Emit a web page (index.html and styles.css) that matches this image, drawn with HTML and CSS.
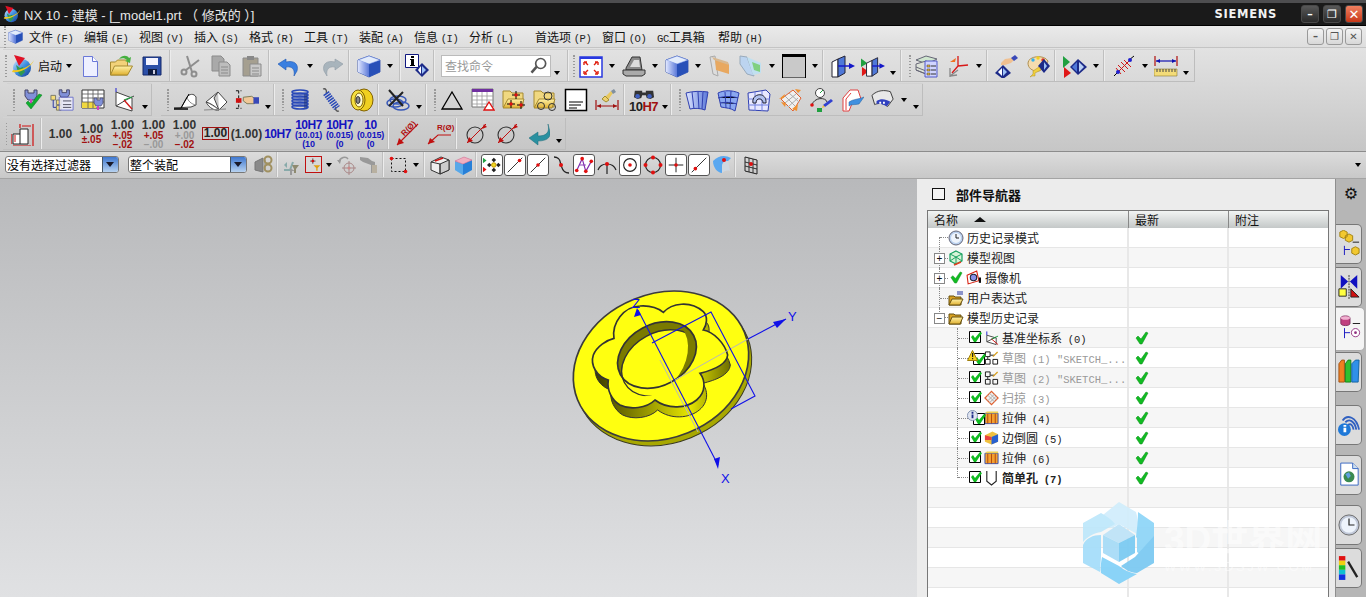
FILE: index.html
```html
<!DOCTYPE html>
<html lang="zh">
<head>
<meta charset="utf-8">
<title>NX 10 - 建模</title>
<link rel="stylesheet" href="styles.css">
</head>
<body>
<svg class="defs" xmlns="http://www.w3.org/2000/svg">
<defs>
<linearGradient id="gb" x1="0" y1="0" x2="1" y2="1"><stop offset="0" stop-color="#cfe6ff"/><stop offset=".5" stop-color="#3f8fe0"/><stop offset="1" stop-color="#123a90"/></linearGradient>
<linearGradient id="gy" x1="0" y1="0" x2="0" y2="1"><stop offset="0" stop-color="#fff2a8"/><stop offset="1" stop-color="#e0b030"/></linearGradient>
<linearGradient id="gs" x1="0" y1="0" x2="1" y2="0"><stop offset="0" stop-color="#dfe6ff"/><stop offset="1" stop-color="#5a78d8"/></linearGradient>
<linearGradient id="gw" x1="0" y1="0" x2="1" y2="0"><stop offset="0" stop-color="#3c3c00"/><stop offset=".45" stop-color="#a8a800"/><stop offset=".7" stop-color="#e6e600"/><stop offset="1" stop-color="#6e6e00"/></linearGradient>
<symbol id="start" viewBox="0 0 24 24"><circle cx="11" cy="14" r="9" fill="url(#gb)"/><path d="M5 11l4 3 3-1 2 5-4 4-3-4z" fill="#2f9a50"/><path d="M1 18C8 20 21 13 23 6c-3 6-13 11-21 10z" fill="#f0c820"/><path d="M3 1l11 3-6 8z" fill="#e01225"/></symbol>
<symbol id="new" viewBox="0 0 24 24"><path d="M5.500 2.500h9l5 5v15h-14z" fill="#eef0ff" stroke="#6a78d8"/><path d="M14.500 2.500v5h5" fill="#fff" stroke="#6a78d8"/></symbol>
<symbol id="open" viewBox="0 0 24 24"><path d="M1.500 21V8h5l2-2h10v15z" fill="#f2d27a" stroke="#a68a30"/><path d="M1.500 21l4-9h18l-5 9z" fill="url(#gy)" stroke="#a68a30"/><path d="M10 5C13 1 18 1 20 4l2-1-1 6-5-2 2-1c-2-2-5-2-8-1z" fill="#46b040"/></symbol>
<symbol id="save" viewBox="0 0 24 24"><path d="M3 3h18v18H3z" fill="#2b4fa8" stroke="#14286a"/><path d="M6 4h12v7H6z" fill="#f4f4ff"/><path d="M8 15h9v6H8z" fill="#101c40"/><path d="M13 16h2v4h-2z" fill="#ccd"/></symbol>
<symbol id="scis" viewBox="0 0 24 24"><g fill="none" stroke="#8e8e8e" stroke-width="2"><circle cx="6" cy="18" r="2.500"/><circle cx="16" cy="20" r="2.500"/><path d="M8 16L21 6M14 18L9 2"/></g></symbol>
<symbol id="copy" viewBox="0 0 24 24"><path d="M3 2h9l3 3v12H3z" fill="#a9a9a9" stroke="#8b8b8b"/><path d="M10 8h8l3 3v11H10z" fill="#bdbdbd" stroke="#8b8b8b"/><path d="M12 13h7M12 16h7M12 19h7" stroke="#8b8b8b"/></symbol>
<symbol id="paste" viewBox="0 0 24 24"><path d="M3 4h15v18H3z" fill="#a59f90" stroke="#8b8b8b"/><path d="M7 2h7v4H7z" fill="#888"/><path d="M10 10h11v12H10z" fill="#c8c8c8" stroke="#8b8b8b"/><path d="M12 14h7M12 17h7M12 20h7" stroke="#8b8b8b"/></symbol>
<symbol id="undo" viewBox="0 0 24 24"><path d="M1 10l8-5v3c8-2 13 2 11 9l-3 5c1-6-1-10-8-9v3z" fill="#3a7fe0" stroke="#1f55b0" stroke-width=".6"/></symbol>
<symbol id="redo" viewBox="0 0 24 24"><path d="M23 10l-8-5v3C7 6 2 10 4 17l3 5C6 16 8 12 15 13v3z" fill="#a8b4bc" stroke="#8e9aa4" stroke-width=".6"/></symbol>
<symbol id="cube" viewBox="0 0 24 24"><path d="M1 6l11-4 11 4v12l-11 5-11-5z" fill="#9dbdf0" stroke="#2a48a8" stroke-width=".8"/><path d="M12 10l11-4v12l-11 5z" fill="#2850b8"/><path d="M1 6l11-4 11 4-11 4z" fill="#e3ecfb" stroke="#5a78d8" stroke-width=".5"/><path d="M1 6l11 4v13L1 18z" fill="url(#gs)"/></symbol>
<symbol id="info" viewBox="0 0 24 24"><path d="M.500 .500h13v13H.500z" fill="#fff" stroke="#101880"/><path d="M6 2h3v2H6zM5 5h4v6h1v1H5v-1h1V6H5z" fill="#000"/><path d="M17 9l7 7-7 7-7-7z" fill="#1c2a88"/><path d="M17 12l4 4-4 4z" fill="#9dc0f5"/><path d="M16 12v8l-3-4z" fill="#fff"/></symbol>
<symbol id="lens" viewBox="0 0 24 24"><circle cx="14" cy="9" r="6" fill="#fff" stroke="#555" stroke-width="2"/><path d="M9 13l-6 7" stroke="#555" stroke-width="3"/></symbol>
<symbol id="fit" viewBox="0 0 24 24"><path d="M1 3h22v20H1z" fill="#fff" stroke="#2838e0" stroke-width="1.500"/><path d="M1 3h22v2H1z" fill="#2838e0"/><path d="M6 8l3 3M18 8l-3 3M6 19l3-3M18 19l-3-3M5 8h3M5 8v3M19 8h-3M19 8v3M5 20h3M5 20v-3M19 20h-3M19 20v-3" stroke="#e02010" stroke-width="1.400"/></symbol>
<symbol id="shade" viewBox="0 0 24 24"><path d="M4 14L10 3h8l2 13H4z" fill="#8a8a8a" stroke="#333"/><path d="M8 13l4-7h5l1 7z" fill="#ddd"/><path d="M1 16h22v4l-3 2H4l-3-2z" fill="#aaa" stroke="#333"/></symbol>
<symbol id="boxo" viewBox="0 0 24 24"><path d="M2 3l5-1 3 20-5-2z" fill="#ddd" stroke="#aaa"/><path d="M7 5l14 5v10l-13-4z" fill="#e8a860"/><path d="M4 3l16 5 1 3-15-5z" fill="#d8b890"/></symbol>
<symbol id="boxg" viewBox="0 0 24 24"><path d="M1 2l7 1 7 19-7-2-7-10z" fill="#bcd4f0" stroke="#9ab"/><path d="M8 3l14 6v10l-8 2z" fill="#c0e0f0"/><path d="M13 8l8 3v7l-6-2z" fill="#80d080"/></symbol>
<symbol id="sq" viewBox="0 0 24 24"><path d="M.500 1h23v23H.500z" fill="#c9c9c9" stroke="#000"/><path d="M0 0h24v3H0z" fill="#000"/></symbol>
<symbol id="clip1" viewBox="0 0 24 24"><path d="M1 8l6-3v18l-6 0z" fill="#fff" stroke="#223"/><path d="M7 5l7-3v17l-7 4z" fill="#4f78d8" stroke="#223"/><path d="M7 12h13" stroke="#1418c8" stroke-width="1.500"/><path d="M24 12l-6-3v6z" fill="#1418c8"/></symbol>
<symbol id="clip2" viewBox="0 0 26 24"><path d="M0 4l7 5-7 4z" fill="#20a040"/><path d="M1 13l7 5-7 5z" fill="#e01818"/><path d="M6 9l6-3v17H6z" fill="#fff" stroke="#223"/><path d="M12 6l6-3v16l-6 4z" fill="#4f78d8" stroke="#223"/><path d="M12 12h9" stroke="#1418c8" stroke-width="1.500"/><path d="M26 12l-6-3v6z" fill="#1418c8"/></symbol>
<symbol id="layers" viewBox="0 0 24 24"><path d="M1 6l10-4 11 3-10 5z" fill="#cfe6cf" stroke="#667"/><path d="M1 10l10-3 5 2v8l-5 3-10-4z" fill="#dde2d8" stroke="#667"/><path d="M1 13l10 4M1 16l10 4" stroke="#667"/><path d="M10 7h12v16H10z" fill="#d0d4ff" stroke="#5058c8"/><path d="M12 11h3v2h-3zM12 15h3v2h-3zM12 19h3v2h-3z" fill="#f0c040" stroke="#333" stroke-width=".5"/><path d="M16 12h5M16 16h5M16 20h5" stroke="#333"/></symbol>
<symbol id="csysr" viewBox="0 0 24 24"><path d="M12 12V2M12 12l10-1M12 12l-6 7" stroke="#d81818" stroke-width="1.300"/><path d="M4 8l6-4-1 4z" fill="#f07020"/><path d="M4 14v9M4 22l7-1M4 22l8-6" stroke="#888" stroke-width="1.300"/></symbol>
<symbol id="hand" viewBox="0 0 24 24"><path d="M6 9l4-4 7-1 2 2-3 3-6 2-4 0z" fill="#f0c090"/><path d="M16 4l4-3 3 3-4 3z" fill="#3848b8"/><path d="M8 11l8 8-8 6-8-6z" fill="#1c2a88"/><path d="M8 14v8l4-4z" fill="#9dc0f5"/><path d="M7 14v8l-4-4z" fill="#fff"/></symbol>
<symbol id="palette" viewBox="0 0 24 24"><path d="M2 9C2 2 18 0 22 7c0 3-4 3-5 5-2 3-1 5-6 5C6 17 2 14 2 9z" fill="#f5dcae" stroke="#b09050"/><circle cx="7" cy="6" r="1.700" fill="#35b0e8"/><circle cx="12" cy="4" r="1.700" fill="#f0d020"/><circle cx="17" cy="6" r="1.700" fill="#e03020"/><path d="M18 5l6 7-6 7-6-7z" fill="#1c2a88"/><path d="M18 8v8l3-4z" fill="#9dc0f5"/><path d="M4 23l3-3v-3l6-4 2 3-6 3v3H6z" fill="#f0d040" stroke="#b09020" stroke-width=".5"/></symbol>
<symbol id="tridia" viewBox="0 0 24 24"><path d="M0 2l7 6-7 6z" fill="#20a040"/><path d="M1 13l7 6-7 5z" fill="#e01818"/><path d="M15 5l9 8-9 8-8-8z" fill="#1c2a88"/><path d="M16 8v10l5-5z" fill="#b9cff5"/><path d="M14 8v10l-5-5z" fill="#4f78d8"/></symbol>
<symbol id="hatch" viewBox="0 0 24 24"><path d="M2 22l6-6M22 2l-5 4" stroke="#000"/><path d="M6 18L18 6" stroke="#d01818"/><path d="M6 11l7 7M9 8l7 7M12 6l7 7M4 14l5 6" stroke="#d01818"/><circle cx="6" cy="18" r="2" fill="#2020d0"/><circle cx="18" cy="6" r="2" fill="#2020d0"/></symbol>
<symbol id="ruler" viewBox="0 0 24 24"><path d="M1 2v10M23 2v10" stroke="#b01010" stroke-width="1.200"/><path d="M2 7h20" stroke="#1010b0" stroke-width="1.200"/><path d="M2 7l4-2v4zM22 7l-4-2v4z" fill="#1010b0"/><path d="M0 15h23v7H0z" fill="#f4dc78" stroke="#8a7a30" stroke-width=".6"/><path d="M3 15v3M6 15v3M9 15v3M12 15v3M15 15v3M18 15v3M21 15v3" stroke="#444"/></symbol>
<symbol id="chk" viewBox="0 0 24 24"><path d="M6 2h3v3h6V2h3v6l-3 4H9L6 8z" fill="#8090d8" stroke="#446"/><path d="M11 11h2v4h-2z" fill="#d040c0"/><path d="M7 15l5 6 11-14-3-1-8 10-3-3z" fill="#10b030" stroke="#0a7a20" stroke-width=".5"/></symbol>
<symbol id="tree" viewBox="0 0 26 24"><path d="M10 1h3v3h5V1h3v5l-2 3h-7l-2-3z" fill="#8090d8" stroke="#446"/><path d="M1 7h5v5H1zM7 12h5v5H7zM7 18h5v5H7z" fill="#f4dc78" stroke="#776"/><path d="M3.500 12v8h3" fill="none" stroke="#2030a0"/><path d="M10 9h15v14H10z" fill="#eef" stroke="#5058c8" opacity=".8"/><path d="M14 13h9M14 17h9M14 20h9" stroke="#445"/></symbol>
<symbol id="table" viewBox="0 0 24 24"><path d="M1 2h22v18H1z" fill="#fff" stroke="#333"/><path d="M1 14h14v6H1z" fill="#f0d840"/><path d="M1 6h22M1 10h22M1 14h22M7 2v18M12 2v18M17 2v18" stroke="#555" stroke-width=".8"/><path d="M13 10h3v2h3v-2h3v5l-2 3h-5l-2-3z" fill="#8090d8" stroke="#446" stroke-width=".7"/><path d="M16 18h2v4h-2z" fill="#d040c0"/></symbol>
<symbol id="csysg" viewBox="0 0 24 24"><path d="M4 4v14l16 5V10z" fill="#fff" stroke="#444"/><path d="M4 18l10-6 8-4" stroke="#444" fill="none"/><path d="M4 4V0" stroke="#2020d0"/><path d="M12 12l8-3" stroke="#20a040" stroke-width="1.300"/><path d="M12 12l8 9" stroke="#d01818" stroke-width="1.300"/></symbol>
<symbol id="sk1" viewBox="0 0 24 24"><path d="M1 20l7 0 6-11c2-3 7-4 9 0v8l-5 2z" fill="#fff" stroke="#444"/><path d="M14 9c1 4 4 7 9 8" fill="none" stroke="#888"/><path d="M1 21h14" stroke="#000" stroke-width="1.500"/><path d="M8 20l8-14" stroke="#000"/></symbol>
<symbol id="sk2" viewBox="0 0 24 24"><path d="M2 14l12-10 9 10-8 8c-4 1-10-2-13-8z" fill="#fff" stroke="#444"/><path d="M2 14c4 1 9 4 13 8" fill="#aaa" stroke="#444"/><path d="M14 4l-4 6 5 12" fill="#c8c8c8" stroke="#444"/><path d="M0 22l22-1" stroke="#888"/></symbol>
<symbol id="ihand" viewBox="0 0 26 24"><path d="M1 2h6M4 2v19M1 21h6" stroke="#000" fill="none" stroke-dasharray="3 2"/><path d="M1 10h6v5H1z" fill="#d01010"/><path d="M9 9l9-1 3 2v6h-8l-4-3z" fill="#f0c898" stroke="#775"/><path d="M20 9h6v7h-6z" fill="#3848b8"/></symbol>
<symbol id="spr1" viewBox="0 0 24 24"><g fill="none" stroke="#2848b8" stroke-width="1.700"><ellipse cx="12" cy="4" rx="8" ry="2"/><ellipse cx="12" cy="7" rx="8" ry="2"/><ellipse cx="12" cy="10" rx="8" ry="2"/><ellipse cx="12" cy="13" rx="8" ry="2"/><ellipse cx="12" cy="16" rx="8" ry="2"/><ellipse cx="12" cy="19" rx="8" ry="2"/></g><path d="M16 6h3v14h-3z" fill="#1a2f78" opacity=".5"/></symbol>
<symbol id="spr2" viewBox="0 0 24 24"><path d="M4 1c3-1 4 2 3 4M20 23c-3 1-4-2-3-4" stroke="#555" stroke-width="1.300" fill="none"/><path d="M7 5l11 15" stroke="#2848b8" stroke-width="7" stroke-dasharray="1.500 1"/></symbol>
<symbol id="coil" viewBox="0 0 24 24"><ellipse cx="14" cy="12" rx="9" ry="11" fill="#f0d020" stroke="#806000"/><ellipse cx="8" cy="12" rx="7" ry="10" fill="#f5e040" stroke="#806000"/><ellipse cx="9" cy="12" rx="4" ry="7" fill="#fffbd0" stroke="#806000"/><ellipse cx="8" cy="12" rx="2" ry="3.500" fill="#888" stroke="#333"/></symbol>
<symbol id="xspr" viewBox="0 0 24 24"><g fill="none" stroke="#3858b8" stroke-width="1.500"><ellipse cx="9" cy="15" rx="8" ry="4"/><ellipse cx="12" cy="12" rx="8" ry="4"/><ellipse cx="15" cy="18" rx="8" ry="4"/></g><path d="M3 2l14 16M17 4L3 18" stroke="#222" stroke-width="2"/></symbol>
<symbol id="tri" viewBox="0 0 24 24"><path d="M2 21L12 4l10 17z" fill="none" stroke="#000" stroke-width="1.300"/></symbol>
<symbol id="ptable" viewBox="0 0 24 24"><path d="M1 1h21v18H1z" fill="#fff" stroke="#777"/><path d="M1 1h21v3H1z" fill="#7030a0"/><path d="M1 8h21M1 12h21M1 16h21M6 4v15M11 4v15M16 4v15" stroke="#999" stroke-width=".8"/><path d="M13 22l5-8 5 8z" fill="#fff" stroke="#e01010" stroke-width="1.300"/></symbol>
<symbol id="fplus" viewBox="0 0 24 24"><path d="M1 19V3h7l2 2h11v14z" fill="#f0d880" stroke="#a68a30"/><path d="M6 11h16l-3 9H1z" fill="url(#gy)" stroke="#a68a30"/><path d="M14 3v8M10 7h8M9 12v8M5 16h8M19 13v8M15 17h8" stroke="#000"/><circle cx="14" cy="7" r="1.700" fill="#e01010"/><circle cx="9" cy="16" r="1.700" fill="#e01010"/><circle cx="19" cy="17" r="1.700" fill="#e01010"/></symbol>
<symbol id="fcirc" viewBox="0 0 24 24"><path d="M1 19V3h7l2 2h11v14z" fill="#f0d880" stroke="#a68a30"/><path d="M6 11h16l-3 9H1z" fill="url(#gy)" stroke="#a68a30"/><g fill="none" stroke="#333"><circle cx="15" cy="8" r="4"/><circle cx="8" cy="18" r="3.500"/><circle cx="19" cy="19" r="3.500"/></g></symbol>
<symbol id="note" viewBox="0 0 24 24"><path d="M1.500 1.500h21v21h-21z" fill="#fff" stroke="#000" stroke-width="1.500"/><path d="M5 14h14M5 17h12M5 20h8" stroke="#000"/></symbol>
<symbol id="brush" viewBox="0 0 24 24"><path d="M10 9l6-6 2 2-5 7z" fill="#e8c860"/><path d="M16 3l3-2 2 3-3 2z" fill="#8090a0"/><path d="M10 8l4 4-3 2-4-3z" fill="#f0d070" stroke="#a09030"/><path d="M1 12v10M23 12v10" stroke="#a01010" stroke-width="1.200"/><path d="M2 18h20" stroke="#a01010"/><path d="M2 18l4-2v4zM22 18l-4-2v4z" fill="#a01010"/></symbol>
<symbol id="binoc" viewBox="0 0 24 14"><path d="M2 4h8v2h4V4h8l1 7-4 2-4-1-1-3h-4l-1 3-4 1-4-2z" fill="#333"/><circle cx="5" cy="10" r="2.500" fill="#4060c0"/><circle cx="18" cy="10" r="2.500" fill="#4060c0"/></symbol>
<symbol id="s1" viewBox="0 0 24 24"><path d="M1 5c7-2 15-2 22-1l-3 18c-5-2-11-2-15-1z" fill="url(#gs)" stroke="#3040b0"/><path d="M7 4l2 17M13 4l1 17M18 4l-1 17" stroke="#3040b0"/></symbol>
<symbol id="s2" viewBox="0 0 24 24"><path d="M2 5c6-3 14-3 21 0l-4 18c-4-3-9-3-14-4z" fill="#8aa8f0" stroke="#3040b0"/><path d="M2 10c7-2 14-2 20 0M4 15c5-1 10-1 17 1M9 4l1 16M15 3l-1 18" stroke="#3040b0"/></symbol>
<symbol id="s3" viewBox="0 0 24 24"><path d="M1 5l18-3 4 4-2 17-19-1z" fill="#e8e8ff" stroke="#3040b0"/><path d="M1 11h22M1 17h21M8 4v19M15 3v20" stroke="#7080e0"/><path d="M6 15c-2-10 14-12 13 0l-3 0c0-5-7-6-7 0z" fill="#b0c0f0" stroke="#223"/></symbol>
<symbol id="s4" viewBox="0 0 24 24"><path d="M3 11L15 2l8 8-8 13z" fill="#f0f0f0" stroke="#e06030"/><path d="M7 8l11 11M11 5l10 9M7 15l11-9M10 19l10-9" stroke="#aaa"/><path d="M1 11l6-5-1 4zM17 1l6 1-3 3zM14 21l6-5-1 7zM3 14l5 1-1 4z" fill="#f09030"/></symbol>
<symbol id="s5" viewBox="0 0 24 24"><circle cx="11" cy="5" r="4.500" fill="#fff" stroke="#444"/><path d="M11 5l3-3" stroke="#20a040"/><path d="M3 17C5 9 17 9 18 14" fill="none" stroke="#333"/><circle cx="3" cy="17" r="1.800" fill="#e01010"/><path d="M8 20h5v4H8z" fill="#20a040"/><path d="M14 17l8-6 2 2-8 6z" fill="#3040d0"/><path d="M14 17l2 2-3 1z" fill="#f0c040"/></symbol>
<symbol id="s6" viewBox="0 0 24 24"><path d="M3 23V10l7-8h8l3 9-8 2-4 10z" fill="#fff" stroke="#e04040"/><path d="M6 22V11l5-6" stroke="#e04040" fill="none"/><path d="M9 14c4-3 11-3 15-5l-5 7c-4 1-8 0-10 2z" fill="#4090e0" stroke="#2060a0" stroke-width=".5"/></symbol>
<symbol id="s7" viewBox="0 0 26 24"><path d="M1 7c6-6 14-6 20-4l3 8-6 8c-6-5-12-3-14-2z" fill="#e8e8e8" stroke="#333"/><path d="M6 13c5-3 10-2 15 1l-4 5c-4-3-8-3-11-3z" fill="#3040c0"/><path d="M9 14h2v2H9zM13 14h2v2h-2z" fill="#fff"/></symbol>
<symbol id="dimd" viewBox="0 0 24 24"><path d="M2 12h7v10H2zM9 12V7h8v15H9" fill="#fff" stroke="#222"/><path d="M20 4h-9M4 20v-7" stroke="#d01010"/><path d="M9 2v4M22 2v22M0 12v10M2 24h18" stroke="#d01010" stroke-width="1.200"/></symbol>
<symbol id="rd1" viewBox="0 0 24 24"><path d="M1 23l21-21" stroke="#c01010" stroke-width="1.100"/><path d="M1 23l2-7 5 5z" fill="#c01010"/></symbol>
<symbol id="rd2" viewBox="0 0 24 24"><path d="M1 22L11 13h13" stroke="#c01010" fill="none" stroke-width="1.100"/><path d="M1 22l2-6 5 4z" fill="#c01010"/></symbol>
<symbol id="cd1" viewBox="0 0 24 24"><circle cx="11" cy="13" r="8" fill="none" stroke="#333" stroke-width="1.100"/><path d="M3 21L22 2" stroke="#c01010"/><path d="M3 21l2-6 4 4zM18 7l2-5 3 3z" fill="#c01010"/></symbol>
<symbol id="ret" viewBox="0 0 24 24"><path d="M22 2c2 9-2 12-10 12v-4l-9 6 9 7v-4c8 0 13-3 12-9z" fill="#2a90a0" stroke="#1a6a78" stroke-width=".5"/></symbol>
<symbol id="d1" viewBox="0 0 22 22"><path d="M2 16h6l3-8" stroke="#8aa" fill="none" stroke-width="2"/><path d="M8 14l5 3h-3v4H8z" fill="#999"/><path d="M10 11l7 0-3 4v4h-2v-4z" fill="#8e8a70"/><path d="M2 11l3-3v6z" fill="#8aa"/></symbol>
<symbol id="d2" viewBox="0 0 22 22"><path d="M6 6h8M10 2v8" stroke="#222"/><circle cx="10" cy="6" r="2" fill="#d01010"/><path d="M11 12h10l-4 4v4h-2v-4z" fill="#e0a010"/></symbol>
<symbol id="d3" viewBox="0 0 22 22"><path d="M3 8C4 3 10 2 12 5" stroke="#999" fill="none" stroke-width="1.500"/><path d="M1 6l4 0-1 4z" fill="#999"/><circle cx="13" cy="14" r="5" fill="none" stroke="#a88"/><path d="M13 7v14M6 14h14" stroke="#a88"/><circle cx="13" cy="14" r="1.500" fill="#c88"/></symbol>
<symbol id="d4" viewBox="0 0 22 22"><path d="M1 3l8 1 4 3 3 1v11h-4v-8l-8-3-3-2z" fill="#999"/><path d="M13 11h5v8h-5z" fill="#b8b0a0"/></symbol>
<symbol id="link" viewBox="0 0 22 22"><path d="M2 8l8-4v14l-8-2z" fill="#8a8a8a" stroke="#777"/><path d="M10 4l3 2v10l-3 2z" fill="#aaa"/><g fill="none" stroke="#a09060" stroke-width="2"><circle cx="15" cy="6" r="3.500"/><circle cx="15" cy="14" r="3.500"/></g></symbol>
<symbol id="rect" viewBox="0 0 22 22"><path d="M3.500 4.500h14v13h-14z" fill="none" stroke="#111" stroke-dasharray="2 2"/><circle cx="3.500" cy="4.500" r="1.800" fill="#e01010"/><circle cx="17.500" cy="17.500" r="1.800" fill="#e01010"/></symbol>
<symbol id="bx1" viewBox="0 0 22 22"><path d="M2 8l10-5 8 3v10l-9 4-9-4z" fill="#eee" stroke="#333"/><path d="M11 10l9-4v10l-9 4z" fill="#ccc" stroke="#333"/><path d="M2 8l9 2v10" fill="none" stroke="#333"/><path d="M6 7l8-3" stroke="#d01010" stroke-width="1.500"/></symbol>
<symbol id="bx2" viewBox="0 0 22 22"><path d="M3 7l9-4 8 3v10l-9 5-8-5z" fill="#8ac0f0"/><path d="M11 10l9-4v10l-9 5z" fill="#2880d8"/><path d="M3 7l8 3v11l-8-5z" fill="#58a8e8"/><path d="M3 7l9-4 8 3-9 4z" fill="#f0b0c0" stroke="#e06080" stroke-width=".5"/></symbol>
<symbol id="sn1" viewBox="0 0 22 22"><path d="M1 3l4 3-4 3z" fill="#20a040"/><path d="M1 13l4 3-4 3z" fill="#e01010"/><path d="M13 3l2.500 2.500-2.500 2.500-2.500-2.500zM8 8.500l2.500 2.500-2.500 2.500-2.500-2.500zM18 8.500l2.500 2.500-2.500 2.500-2.500-2.500zM13 14l2.500 2.500-2.500 2.500-2.500-2.500z" fill="#222"/><circle cx="13" cy="11" r="2.500" fill="#f0d820" stroke="#c09000"/></symbol>
<symbol id="ln1" viewBox="0 0 22 22"><path d="M3 19L19 3" stroke="#222"/><circle cx="16" cy="6" r="2" fill="#e01010"/></symbol>
<symbol id="ln2" viewBox="0 0 22 22"><path d="M3 19L19 3" stroke="#222"/><circle cx="11" cy="11" r="2" fill="#e01010"/></symbol>
<symbol id="crv" viewBox="0 0 22 22"><path d="M4 3c7 0 6 6 7 8s1 8 8 8" fill="none" stroke="#222" stroke-width="1.300"/><circle cx="11" cy="11" r="2" fill="#e01010"/></symbol>
<symbol id="wave" viewBox="0 0 22 22"><path d="M3 17L9 4l4 14 6-11" fill="none" stroke="#8030b0" stroke-width="1.300"/><path d="M6 11h7" stroke="#8030b0"/><circle cx="3" cy="17" r="2" fill="#e01010"/><circle cx="9" cy="4" r="2" fill="#e01010"/><circle cx="13" cy="18" r="2" fill="#e01010"/><circle cx="19" cy="7" r="2" fill="#e01010"/></symbol>
<symbol id="arc" viewBox="0 0 22 22"><path d="M2 16C5 8 17 8 20 16M11 11v9" fill="none" stroke="#222" stroke-width="1.200"/><circle cx="11" cy="10" r="2" fill="#e01010"/></symbol>
<symbol id="circ1" viewBox="0 0 22 22"><circle cx="11" cy="11" r="7" fill="none" stroke="#222" stroke-width="1.200"/><circle cx="11" cy="11" r="2" fill="#e01010"/></symbol>
<symbol id="circ2" viewBox="0 0 22 22"><circle cx="11" cy="11" r="7.500" fill="none" stroke="#222" stroke-width="1.200"/><circle cx="11" cy="3.500" r="2" fill="#e01010"/><circle cx="3.500" cy="11" r="2" fill="#e01010"/><circle cx="18.500" cy="11" r="2" fill="#e01010"/><circle cx="11" cy="18.500" r="2" fill="#e01010"/></symbol>
<symbol id="cross" viewBox="0 0 22 22"><path d="M11 3v16M3 11h16" stroke="#111"/><circle cx="11" cy="11" r="2" fill="#e01010"/></symbol>
<symbol id="ln3" viewBox="0 0 22 22"><path d="M3 19L19 3" stroke="#222"/><circle cx="7" cy="15" r="2" fill="#e01010"/></symbol>
<symbol id="surf" viewBox="0 0 22 22"><path d="M2 7c6-6 12-6 18-3l-3 3c-4 0-6 2-6 6v6C7 19 2 14 2 7z" fill="#5aa8f0"/><path d="M11 13c0-4 2-6 6-6l2 10c-3-1-6 0-8 2z" fill="#d0d8e0"/><circle cx="13" cy="6" r="2" fill="#e01010"/></symbol>
<symbol id="grid" viewBox="0 0 22 22"><path d="M5 3l12 3v14L5 17z" fill="none" stroke="#222"/><path d="M9 4v14M13 5v14M5 8l12 3M5 12l12 3" stroke="#222" stroke-width=".9"/><circle cx="11" cy="10" r="2" fill="#e01010"/></symbol>
<symbol id="ok" viewBox="0 0 14 14"><path d="M1 7l2-2 3 3 5-7 2 1-6 11h-2z" fill="#11bb22" stroke="#0b8a18" stroke-width=".5"/></symbol>
<symbol id="cb" viewBox="0 0 13 13"><path d="M.500 .500h11v11H.500z" fill="#fff" stroke="#000"/><path d="M2 6l2-2 2 3 5-6 2 1-6 9H5z" fill="#11bb22"/></symbol>
<symbol id="clock" viewBox="0 0 16 16"><circle cx="8" cy="8" r="7" fill="#b9d0ee" stroke="#667"/><circle cx="8" cy="8" r="5" fill="#eef4fc"/><path d="M8 4v4h3" stroke="#222" fill="none"/></symbol>
<symbol id="views" viewBox="0 0 16 16"><path d="M8 1l6 3v7l-6 3-6-3V4z" fill="#d8f4d8" stroke="#18a060" stroke-width="1.200"/><path d="M2 4l6 3 6-3M8 7v7M2 11l6-4 6 4" stroke="#18a060" fill="none"/><path d="M6 15l7-3" stroke="#e04020" stroke-width="1.500"/></symbol>
<symbol id="cam" viewBox="0 0 14 14"><path d="M1 5l9-4 2 9-10 3z" fill="#fff" stroke="#d82010"/><circle cx="7" cy="7" r="3" fill="#8890e8" stroke="#223"/><path d="M12 7h2v5h-2z" fill="#111"/></symbol>
<symbol id="fold" viewBox="0 0 16 16"><path d="M1 14V4h5l1 1h6v9z" fill="#d8a020" stroke="#665010"/><path d="M1 14l3-7h11l-3 7z" fill="url(#gy)" stroke="#665010"/></symbol>
<symbol id="foldx" viewBox="0 0 16 16"><path d="M1 15V6h5l1 1h6v8z" fill="#d8a020" stroke="#665010"/><path d="M1 15l3-6h11l-3 6z" fill="url(#gy)" stroke="#665010"/><path d="M9 2h6M9 4h6" stroke="#2030a0"/></symbol>
<symbol id="dat" viewBox="0 0 16 16"><path d="M3 5v7l10 3V8z" fill="#fff" stroke="#444"/><path d="M3 5V1" stroke="#2020d0"/><path d="M3 12l10-5" stroke="#444"/><path d="M8 9l7-3" stroke="#20a040"/><path d="M8 9l7 6" stroke="#d01010"/></symbol>
<symbol id="sketch" viewBox="0 0 16 16"><path d="M1.500 1.500h5v5h-5zM1.500 9.500h5v5h-5zM9.500 9.500h5v5h-5z" fill="none" stroke="#111"/><path d="M7 5h4M4 7v2" stroke="#111"/><path d="M9 6l5-5 1 1-5 5z" fill="#d8a020"/></symbol>
<symbol id="sweep" viewBox="0 0 16 16"><path d="M1 8l7-7 7 7-7 7z" fill="#f0f0f0" stroke="#e06030" stroke-width="1.300"/><path d="M4 5l7 7M6 3l7 7M4 11l7-7M6 13l7-7" stroke="#aaa"/></symbol>
<symbol id="ext" viewBox="0 0 16 16"><path d="M1 3h14v11H1z" fill="#f4a030" stroke="#3850b0"/><path d="M4 3v11M8 3v11M12 3v11" stroke="#b04810"/><path d="M1 3l2-2h12v2z" fill="#f0d050"/></symbol>
<symbol id="blend" viewBox="0 0 16 16"><path d="M1 5l8-4 6 3v8l-7 3-7-3z" fill="#f0c040"/><path d="M8 7l7-3v8l-7 3z" fill="#2860d0"/><path d="M1 5l7 2v3H1z" fill="#e84040"/></symbol>
<symbol id="holei" viewBox="0 0 16 16"><path d="M3 .500v11l5 4 5-4v-11" fill="none" stroke="#222" stroke-width="1.200"/></symbol>
<symbol id="warn" viewBox="0 0 11 11"><path d="M5.500 .500l5 10H.500z" fill="#f4d020" stroke="#a08010"/><path d="M5 3h1.200v4H5zM5 8h1.200v1.200H5z" fill="#222"/></symbol>
<symbol id="infoc" viewBox="0 0 12 12"><circle cx="6" cy="6" r="5.500" fill="#dfe4f0" stroke="#8090b0"/><path d="M5 2h2v2H5zM5 5h2v4H5z" fill="#1c2a88"/></symbol>
</defs>
</svg>
<div class="app">
  <div class="topstrip"></div>
  <header class="titlebar">
    <svg class="ti"><use href="#start"/></svg>
    <span class="titletext">NX 10 - 建模 - [_model1.prt （ 修改的 ）]</span>
    <span class="siemens">SIEMENS</span>
    <span class="wb">&#8211;</span><span class="wb wr">&#10064;</span><span class="wb close">&#10005;</span>
  </header>
  <nav class="menubar">
    <span class="grip mg"></span>
    <svg class="mi-icon"><use href="#cube"/></svg>
    <span class="mi">文件 <small>(F)</small></span>
    <span class="mi">编辑 <small>(E)</small></span>
    <span class="mi">视图 <small>(V)</small></span>
    <span class="mi">插入 <small>(S)</small></span>
    <span class="mi">格式 <small>(R)</small></span>
    <span class="mi">工具 <small>(T)</small></span>
    <span class="mi">装配 <small>(A)</small></span>
    <span class="mi">信息 <small>(I)</small></span>
    <span class="mi m66">分析 <small>(L)</small></span>
    <span class="mi m67">首选项 <small>(P)</small></span>
    <span class="mi">窗口 <small>(O)</small></span>
    <span class="mi m61"><small>GC</small>工具箱</span>
    <span class="mi">帮助 <small>(H)</small></span>
    <span class="mwb"><i>&#8211;</i><i>&#10064;</i><i>&#10005;</i></span>
  </nav>
  <section class="tools">
    <div class="toolrow r1">
      <div class="tb first">
        <span class="grip"></span>
        <span class="s"><svg class="i"><use href="#start"/></svg></span>
        <span class="startlabel">启动</span><span class="a short"></span>
        <span class="s"><svg class="i"><use href="#new"/></svg></span>
        <span class="s"><svg class="i"><use href="#open"/></svg></span>
        <span class="s"><svg class="i"><use href="#save"/></svg></span>
      </div>
      <div class="tb">
        <span class="s"><svg class="i"><use href="#scis"/></svg></span>
        <span class="s"><svg class="i"><use href="#copy"/></svg></span>
        <span class="s"><svg class="i"><use href="#paste"/></svg></span>
      </div>
      <div class="tb">
        <span class="s"><svg class="i"><use href="#undo"/></svg></span><span class="a"></span>
        <span class="s"><svg class="i"><use href="#redo"/></svg></span>
      </div>
      <div class="tb wide">
        <span class="s"><svg class="i"><use href="#cube"/></svg></span><span class="a"></span>
      </div>
      <div class="tb flush">
        <span class="s"><svg class="i"><use href="#info"/></svg></span>
      </div>
      <div class="tb search-g">
        <label class="search"><span>查找命令</span><svg class="lens"><use href="#lens"/></svg></label>
        <span class="a lo"></span>
      </div>
      <div class="tb">
        <span class="grip"></span>
        <span class="s"><svg class="i"><use href="#fit"/></svg></span><span class="a"></span>
        <span class="s"><svg class="i"><use href="#shade"/></svg></span><span class="a"></span>
        <span class="s"><svg class="i"><use href="#cube"/></svg></span><span class="a"></span>
        <span class="s"><svg class="i"><use href="#boxo"/></svg></span>
        <span class="s"><svg class="i"><use href="#boxg"/></svg></span><span class="a"></span>
        <span class="s"><svg class="i"><use href="#sq"/></svg></span><span class="a"></span>
      </div>
      <div class="tb">
        <span class="s"><svg class="i"><use href="#clip1"/></svg></span>
        <span class="s n"><svg class="i"><use href="#clip2"/></svg></span><span class="a lo"></span>
      </div>
      <div class="tb">
        <span class="grip g5"></span>
        <span class="s"><svg class="i"><use href="#layers"/></svg></span>
        <span class="s"><svg class="i"><use href="#csysr"/></svg></span><span class="a"></span>
      </div>
      <div class="tb">
        <span class="s"><svg class="i"><use href="#hand"/></svg></span>
        <span class="s"><svg class="i"><use href="#palette"/></svg></span>
      </div>
      <div class="tb">
        <span class="s"><svg class="i"><use href="#tridia"/></svg></span><span class="a"></span>
      </div>
      <div class="tb end">
        <span class="s"><svg class="i"><use href="#hatch"/></svg></span><span class="a"></span>
        <span class="s n"><svg class="i"><use href="#ruler"/></svg></span><span class="a lo"></span>
      </div>
    </div>
    <div class="toolrow r2">
      <div class="tb end p1">
        <span class="grip g4"></span>
        <span class="s"><svg class="i"><use href="#chk"/></svg></span>
        <span class="s"><svg class="i"><use href="#tree"/></svg></span>
        <span class="s"><svg class="i"><use href="#table"/></svg></span>
        <span class="s"><svg class="i"><use href="#csysg"/></svg></span><span class="a lo"></span>
      </div>
      <div class="tb p1 gapl">
        <span class="grip g4"></span>
        <span class="s"><svg class="i"><use href="#sk1"/></svg></span>
        <span class="s"><svg class="i"><use href="#sk2"/></svg></span>
        <span class="s"><svg class="i"><use href="#ihand"/></svg></span><span class="a lo"></span>
      </div>
      <div class="tb p2">
        <span class="grip g5"></span>
        <span class="s"><svg class="i"><use href="#spr1"/></svg></span>
        <span class="s"><svg class="i"><use href="#spr2"/></svg></span>
        <span class="s"><svg class="i"><use href="#coil"/></svg></span>
      </div>
      <div class="tb p2">
        <span class="s"><svg class="i"><use href="#xspr"/></svg></span><span class="a lo"></span>
      </div>
      <div class="tb">
        <span class="grip g5"></span>
        <span class="s"><svg class="i"><use href="#tri"/></svg></span>
        <span class="s"><svg class="i"><use href="#ptable"/></svg></span>
        <span class="s"><svg class="i"><use href="#fplus"/></svg></span>
        <span class="s"><svg class="i"><use href="#fcirc"/></svg></span>
        <span class="s"><svg class="i"><use href="#note"/></svg></span>
        <span class="s"><svg class="i"><use href="#brush"/></svg></span>
      </div>
      <div class="tb p1">
        <span class="s col"><svg class="binoc"><use href="#binoc"/></svg><b class="h7">10<em>H7</em></b></span><span class="a lo"></span>
      </div>
      <div class="tb end p1">
        <span class="grip g5"></span>
        <span class="s"><svg class="i"><use href="#s1"/></svg></span>
        <span class="s"><svg class="i"><use href="#s2"/></svg></span>
        <span class="s"><svg class="i"><use href="#s3"/></svg></span>
        <span class="s"><svg class="i"><use href="#s4"/></svg></span>
        <span class="s"><svg class="i"><use href="#s5"/></svg></span>
        <span class="s"><svg class="i"><use href="#s6"/></svg></span>
        <span class="s"><svg class="i"><use href="#s7"/></svg></span><span class="a hi"></span><span class="a lo"></span>
      </div>
    </div>
    <div class="toolrow r3">
      <div class="tb d1">
        <span class="grip g1"></span>
        <span class="s"><svg class="i"><use href="#dimd"/></svg></span>
      </div>
      <div class="tb">
        <span class="s num">1.00</span>
        <span class="s num st">1.00<u class="red">±.05</u></span>
        <span class="s num st">1.00<u class="red">+.05<br>−.02</u></span>
        <span class="s num st">1.00<u class="red">+.05<br><q>−.00</q></u></span>
        <span class="s num st">1.00<u class="red"><q>+.00</q><br>−.02</u></span>
        <span class="s num"><span class="boxed">1.00</span></span>
        <span class="s num">(1.00)</span>
        <span class="s num blue">10H7</span>
        <span class="s num blue st">10H7<u class="blue">(10.01)<br>(10</u></span>
        <span class="s num blue st">10H7<u class="blue">(0.015)<br>(0</u></span>
        <span class="s num blue st">10<u class="blue">(0.015)<br>(0</u></span>
      </div>
      <div class="tb">
        <span class="s rr"><svg class="i"><use href="#rd1"/></svg><b class="rt tilt">R(Ø)</b></span>
        <span class="s rr"><svg class="i"><use href="#rd2"/></svg><b class="rt">R(Ø)</b></span>
      </div>
      <div class="tb end p1">
        <span class="s"><svg class="i"><use href="#cd1"/></svg></span>
        <span class="s"><svg class="i"><use href="#cd1"/></svg></span>
        <span class="s"><svg class="i"><use href="#ret"/></svg></span><span class="a lo"></span>
      </div>
    </div>
  </section>
  <section class="selbar">
    <label class="combo c1"><span>没有选择过滤器</span><i class="cbtn"></i></label>
    <label class="combo c2"><span>整个装配</span><i class="cbtn"></i></label>
    <div class="sg pa"><span class="q"><svg class="j"><use href="#link"/></svg></span></div>
    <div class="sg pb">
      <span class="q n"><svg class="j"><use href="#d1"/></svg></span>
      <span class="q n"><svg class="j red-frame"><use href="#d2"/></svg></span><span class="a"></span>
      <span class="q"><svg class="j"><use href="#d3"/></svg></span>
      <span class="q"><svg class="j"><use href="#d4"/></svg></span>
    </div>
    <div class="sg"><span class="q"><svg class="j"><use href="#rect"/></svg></span><span class="a"></span></div>
    <div class="sg">
      <span class="q"><svg class="j"><use href="#bx1"/></svg></span>
      <span class="q"><svg class="j"><use href="#bx2"/></svg></span>
    </div>
    <div class="sg">
      <span class="q"><svg class="j on"><use href="#sn1"/></svg></span>
      <span class="q"><svg class="j on"><use href="#ln1"/></svg></span>
      <span class="q"><svg class="j on"><use href="#ln2"/></svg></span>
      <span class="q"><svg class="j"><use href="#crv"/></svg></span>
      <span class="q"><svg class="j on"><use href="#wave"/></svg></span>
      <span class="q"><svg class="j"><use href="#arc"/></svg></span>
      <span class="q"><svg class="j on"><use href="#circ1"/></svg></span>
      <span class="q"><svg class="j"><use href="#circ2"/></svg></span>
      <span class="q"><svg class="j on"><use href="#cross"/></svg></span>
      <span class="q"><svg class="j on"><use href="#ln3"/></svg></span>
      <span class="q"><svg class="j"><use href="#surf"/></svg></span>
    </div>
    <div class="sg nb"><span class="q"><svg class="j"><use href="#grid"/></svg></span></div>
    <span class="a selarrow"></span>
  </section>
  <main class="work">
    <div class="gfx">
      <svg class="model" viewBox="0 179 917 418" xmlns="http://www.w3.org/2000/svg">
        <defs>
          <path id="flower" d="M222 175C215 130 250 80 300 78C330 76 355 85 370 97C395 70 450 60 490 95C505 110 500 135 490 150C520 155 555 190 563 225C560 255 520 270 480 280C495 300 500 335 470 360C440 385 385 390 345 360C320 385 270 390 240 375C215 360 200 330 205 300C170 290 150 255 160 225C170 200 200 180 222 175Z"/>
          <clipPath id="holeclip"><ellipse cx="657" cy="355" rx="41.500" ry="30.500" transform="rotate(-28 657 355)"/></clipPath>
        </defs>
        <ellipse cx="664" cy="371" rx="90" ry="72" transform="rotate(-22 664 371)" fill="#a8a800" stroke="#3a3a20"/>
        <ellipse cx="661" cy="366" rx="90" ry="72" transform="rotate(-22 661 366)" fill="#ffff10" stroke="#3c3c3c" stroke-width="1.700"/>
        <g transform="translate(540 280) scale(.3333)">
          <use href="#flower" transform="translate(8 30)" fill="url(#gw)" stroke="#333" stroke-width="3"/>
          <use href="#flower" fill="#ffff10" stroke="#333" stroke-width="5"/>
        </g>
        <ellipse cx="657" cy="355" rx="41.500" ry="30.500" transform="rotate(-28 657 355)" fill="#7a7a00"/>
        <ellipse cx="661" cy="363" rx="41.500" ry="30.500" transform="rotate(-28 661 363)" fill="#ffff10" stroke="#333" stroke-width="1.400" clip-path="url(#holeclip)"/>
        <ellipse cx="657" cy="355" rx="41.500" ry="30.500" transform="rotate(-28 657 355)" fill="none" stroke="#333" stroke-width="1.700"/>
        <path d="M675 380L748 339M660 360L698 432" stroke="#b8b8b8" fill="none"/>
        <g stroke="#1010e8" fill="none" stroke-width="1.100">
          <path d="M638 310L718 465"/>
          <path d="M652 343L711 312L755 396L731 409"/>
          <path d="M748 339L786 319"/>
        </g>
        <path d="M637 308l-3 9 7-2z" fill="#1010e8"/>
        <path d="M718 469l-4-10 6-2z" fill="#1010e8"/>
        <path d="M786 319l-13 3 4 6z" fill="#1010e8"/>
        <text x="632" y="308" class="ax">Z</text>
        <text x="788" y="321" class="ax">Y</text>
        <text x="721" y="483" class="ax">X</text>
      </svg>
    </div>
    <aside class="panel">
      <div class="panelhead"><span class="pin"></span><strong>部件导航器</strong></div>
      <div class="table">
        <div class="row head">
          <div class="c name">名称<span class="sort"></span></div><div class="c latest">最新</div><div class="c note">附注</div>
        </div>
        <div class="row"><div class="c name"><span class="stem start"></span><svg class="ic"><use href="#clock"/></svg><span class="lb">历史记录模式</span></div><div class="c latest"></div><div class="c note"></div></div>
        <div class="row"><div class="c name"><span class="stem"><i class="pm">+</i></span><svg class="ic"><use href="#views"/></svg><span class="lb">模型视图</span></div><div class="c latest"></div><div class="c note"></div></div>
        <div class="row"><div class="c name"><span class="stem"><i class="pm">+</i></span><svg class="okm"><use href="#ok"/></svg><svg class="ic sm"><use href="#cam"/></svg><span class="lb cam">摄像机</span></div><div class="c latest"></div><div class="c note"></div></div>
        <div class="row"><div class="c name"><span class="stem"></span><svg class="ic"><use href="#foldx"/></svg><span class="lb">用户表达式</span></div><div class="c latest"></div><div class="c note"></div></div>
        <div class="row"><div class="c name"><span class="stem last"><i class="pm">−</i></span><svg class="ic"><use href="#fold"/></svg><span class="lb">模型历史记录</span></div><div class="c latest"></div><div class="c note"></div></div>
        <div class="row"><div class="c name"><span class="stem l2"></span><svg class="cbx"><use href="#cb"/></svg><svg class="ic2"><use href="#dat"/></svg><span class="lb2">基准坐标系 <small>(0)</small></span></div><div class="c latest"><svg class="okc"><use href="#ok"/></svg></div><div class="c note"></div></div>
        <div class="row"><div class="c name"><span class="stem l2"></span><svg class="cbx shifted"><use href="#cb"/></svg><svg class="flag"><use href="#warn"/></svg><svg class="ic2"><use href="#sketch"/></svg><span class="lb2 dim">草图 <small>(1) "SKETCH_...</small></span></div><div class="c latest"><svg class="okc"><use href="#ok"/></svg></div><div class="c note"></div></div>
        <div class="row"><div class="c name"><span class="stem l2"></span><svg class="cbx"><use href="#cb"/></svg><svg class="ic2"><use href="#sketch"/></svg><span class="lb2 dim">草图 <small>(2) "SKETCH_...</small></span></div><div class="c latest"><svg class="okc"><use href="#ok"/></svg></div><div class="c note"></div></div>
        <div class="row"><div class="c name"><span class="stem l2"></span><svg class="cbx"><use href="#cb"/></svg><svg class="ic2"><use href="#sweep"/></svg><span class="lb2 dim">扫掠 <small>(3)</small></span></div><div class="c latest"><svg class="okc"><use href="#ok"/></svg></div><div class="c note"></div></div>
        <div class="row"><div class="c name"><span class="stem l2"></span><svg class="cbx shifted"><use href="#cb"/></svg><svg class="flag"><use href="#infoc"/></svg><svg class="ic2"><use href="#ext"/></svg><span class="lb2">拉伸 <small>(4)</small></span></div><div class="c latest"><svg class="okc"><use href="#ok"/></svg></div><div class="c note"></div></div>
        <div class="row"><div class="c name"><span class="stem l2"></span><svg class="cbx"><use href="#cb"/></svg><svg class="ic2"><use href="#blend"/></svg><span class="lb2">边倒圆 <small>(5)</small></span></div><div class="c latest"><svg class="okc"><use href="#ok"/></svg></div><div class="c note"></div></div>
        <div class="row"><div class="c name"><span class="stem l2"></span><svg class="cbx"><use href="#cb"/></svg><svg class="ic2"><use href="#ext"/></svg><span class="lb2">拉伸 <small>(6)</small></span></div><div class="c latest"><svg class="okc"><use href="#ok"/></svg></div><div class="c note"></div></div>
        <div class="row"><div class="c name"><span class="stem l2 last"></span><svg class="cbx"><use href="#cb"/></svg><svg class="ic2"><use href="#holei"/></svg><span class="lb2 cur">简单孔 <small>(7)</small></span></div><div class="c latest"><svg class="okc"><use href="#ok"/></svg></div><div class="c note"></div></div>
        <div class="row"><div class="c name"></div><div class="c latest"></div><div class="c note"></div></div>
        <div class="row"><div class="c name"></div><div class="c latest"></div><div class="c note"></div></div>
        <div class="row"><div class="c name"></div><div class="c latest"></div><div class="c note"></div></div>
        <div class="row"><div class="c name"></div><div class="c latest"></div><div class="c note"></div></div>
        <div class="row"><div class="c name"></div><div class="c latest"></div><div class="c note"></div></div>
        <div class="row"><div class="c name"></div><div class="c latest"></div><div class="c note"></div></div>
      </div>
    </aside>
    <div class="strip">
      <div class="gear">&#9881;</div>
      <div class="tab"><svg class="ti2" viewBox="0 0 24 30"><path d="M2 2l4-2 4 2v5l-4 2-4-2zM8 6l4-2 4 2v5l-4 2-4-2z" fill="#f2c830" stroke="#a08010"/><path d="M16 13h7" stroke="#111"/><path d="M7 17v10M7 21h6" stroke="#1010c0"/><path d="M15 20l4-2 4 2v5l-4 2-4-2z" fill="#f2c830" stroke="#a08010"/></svg></div>
      <div class="tab"><svg class="ti2" viewBox="0 0 24 30"><path d="M3 2l8 7-8 8zM21 2l-8 7 8 8z" fill="#1010c0"/><path d="M12 2v26" stroke="#222" stroke-dasharray="2 1"/><path d="M1 17h8v8H1z" fill="#ffff40" stroke="#222"/><path d="M14 17l9 9h-9z" fill="#d01010" stroke="#222"/></svg></div>
      <div class="tab active"><svg class="ti2" viewBox="0 0 24 30"><path d="M2 3c0-3 10-3 10 0v6c0 3-10 3-10 0z" fill="#c04080" stroke="#803060"/><ellipse cx="7" cy="3" rx="5" ry="2" fill="#f0b0d0"/><path d="M15 9h8" stroke="#111"/><path d="M6 14v11M6 19h6" stroke="#1010c0"/><circle cx="18" cy="19" r="4.500" fill="#fff" stroke="#903080"/><circle cx="18" cy="19" r="1.500" fill="#903080"/></svg></div>
      <div class="tab"><svg class="ti2" viewBox="0 0 24 30"><path d="M1 6l3-4h3v24H1z" fill="#f08020" stroke="#a05010"/><path d="M8 6l3-4h3v24H8z" fill="#30c030" stroke="#108010"/><path d="M15 6l4-4h4l-1 24h-7z" fill="#3090e8" stroke="#1060a0"/></svg></div>
      <div class="tab sep"><svg class="ti2" viewBox="0 0 24 30"><path d="M5 10C10 3 20 6 23 20M8 12C12 8 18 10 20 20M11 15C14 13 16 15 17 20" fill="none" stroke="#3060c0" stroke-width="2"/><circle cx="7" cy="20" r="7" fill="#1e78d8"/><path d="M6 15h3v2H6zM6 18h3v5H6z" fill="#fff"/></svg></div>
      <div class="tab sep"><svg class="ti2" viewBox="0 0 24 30"><path d="M3 2h13l6 6v18H3z" fill="#fff" stroke="#3060c0"/><path d="M16 2v6h6" fill="#cde" stroke="#3060c0"/><circle cx="12" cy="17" r="6" fill="#3a8a50"/><path d="M8 14l4-2 2 4-3 3z" fill="#60a0e0"/></svg></div>
      <div class="tab sep"><svg class="ti2" viewBox="0 0 24 30"><circle cx="12" cy="15" r="11" fill="#c0c8d8" stroke="#666"/><circle cx="12" cy="15" r="8.500" fill="#eef4fc"/><path d="M12 8v7h6" stroke="#222" stroke-width="1.300" fill="none"/></svg></div>
      <div class="tab tight"><svg class="ti2" viewBox="0 0 24 30"><path d="M1 2h7v5H1z" fill="#e01010"/><path d="M1 7h7v5H1z" fill="#f0d010"/><path d="M1 12h7v5H1z" fill="#20c020"/><path d="M1 17h7v5H1z" fill="#10c0d0"/><path d="M1 22h7v6H1z" fill="#1030e0"/><path d="M11 8l10 17" stroke="#222" stroke-width="2.500"/></svg></div>
    </div>
    <div class="wm">
      <svg class="wmhex" viewBox="1083 502 72 83" xmlns="http://www.w3.org/2000/svg">
        <path d="M1119 502l17 10c2 8 3 14 1 22l-18-10-7 4-19-5z" fill="#d2eefc"/>
        <path d="M1138 512l16 11v29c-4 4-10 6-17 0v-14l-1-1c1-8 2-16 2-25z" fill="#90d6f8"/>
        <path d="M1154 536v27l-17 10c-7 0-12-4-16-7l14-9z" fill="#7dcaf2"/>
        <path d="M1137 574l-18 10-18-11c-1-5 0-10 1-16l17 9c6 5 12 7 18 8z" fill="#85d2f8"/>
        <path d="M1100 572l-17-9v-18c3-7 10-10 18-10v20c0 6-1 12-1 17z" fill="#a6defa"/>
        <path d="M1083 542v-19l18-10c5 3 10 6 14 11l-14 8c-7 1-14 5-18 10z" fill="#bfe8fb"/>
        <path d="M1119 524l16 11-16 8-16-8z" fill="#bfe4f8"/>
        <path d="M1103 535l16 8v19l-16-9z" fill="#a8dcf7"/>
        <path d="M1135 535l-16 8v19l16-9z" fill="#7ccbf2"/>
      </svg>
      <div class="wmtext"><b>3D世界网</b><span>WWW.3DSJW.COM</span></div>
    </div>
  </main>
</div>
</body>
</html>
```

FILE: styles.css
```css
*{box-sizing:border-box}
html,body{margin:0;padding:0;height:100%;overflow:hidden}
body{font-family:"Noto Sans CJK SC","Liberation Sans",sans-serif;font-size:12px;color:#111;background:#ccc}
.defs{position:absolute;width:0;height:0}
.app{width:1366px;height:597px;display:flex;flex-direction:column;overflow:hidden;position:relative}
.topstrip{height:3px;background:#4e4e50;flex:none}
.titlebar{height:23px;flex:none;background:#1a1a1a;border-bottom:1px solid #000;display:flex;align-items:center;color:#eee}
.ti{width:18px;height:18px;margin:0 3px 0 3px}
.titletext{font:13px "Liberation Sans","Noto Sans CJK SC",sans-serif;color:#e8e8e8;white-space:pre}
.siemens{margin-left:auto;font:bold 11.500px "DejaVu Sans",sans-serif;letter-spacing:.7px;color:#f2f2f2;margin-right:24px}
.wb{width:18px;height:18px;margin-right:4px;border-radius:3px;background:linear-gradient(#585858,#2a2a2a);border:1px solid #4a4a4a;color:#fff;display:flex;align-items:center;justify-content:center;font:bold 11px "DejaVu Sans",sans-serif}
.wb.close{background:linear-gradient(#f08060,#c83818);margin-right:3px;font-size:13px}
.menubar{height:22px;flex:none;display:flex;align-items:center;background:linear-gradient(#eaeaea,#dedede);border-bottom:1px solid #c4c4c4;position:relative}
.grip{display:block;width:3px;height:22px;flex:none;background:repeating-linear-gradient(#9a9a9a 0 1.500px,transparent 1.500px 3px);background-size:2px 100%;background-repeat:no-repeat;background-position:right center}
.grip.g5{width:6px}
.grip.g4{width:5px}
.grip.g1{width:1px}
.mg{margin-left:3px;width:3px}
.mi-icon{width:15px;height:15px;margin:0 6px 0 2px}
.mi{width:55px;flex:none;font-size:12px;color:#111;white-space:nowrap}
.mi small{font:10.500px "Liberation Mono",monospace;color:#222;letter-spacing:-.4px}
.mi.m66{width:66px}.mi.m67{width:67px}.mi.m61{width:61px}
.mwb{margin-left:auto;display:flex;gap:2px;margin-right:4px}
.mwb i{width:17px;height:17px;border:1px solid #999;border-radius:3px;background:linear-gradient(#f4f4f4,#d8d8d8);color:#555;font:bold 10px "DejaVu Sans",sans-serif;display:flex;align-items:center;justify-content:center}
.tools{height:104px;flex:none;background:linear-gradient(#e2e2e2,#c6c6c6);border-bottom:1px solid #8c8c8c;padding-top:1px}
.toolrow{height:34px;display:flex;align-items:stretch}
.r1{padding-left:3px}.r2{padding-left:7px}.r3{padding-left:3px}
.tb{display:flex;align-items:center;padding:0 3px;height:33px;border-top:1px solid #d2d2d2;border-bottom:1px solid #bdbdbd;box-shadow:inset -1px 0 #ececec,inset -2px 0 #bfbfbf;flex:none}
.tb.first{padding:0 3.500px 0 1px}
.tb.wide{padding-right:5px}
.tb.flush{padding-left:0}
.tb.search-g{padding:0 0 0 6px;width:134px}
.tb.end{box-shadow:inset -1px 0 #bdbdbd}
.tb.p1{padding-right:1px}.tb.p2{padding-right:2px}
.tb.gapl{margin-left:9px}
.tb.d1{padding-right:4px}
.s{width:31px;height:31px;flex:none;display:flex;align-items:center;justify-content:center;position:relative}
.s.n{width:29px}
.a{width:12px;height:31px;flex:none;position:relative;display:block}
.a::after{content:"";position:absolute;left:3px;top:14px;border:3px solid transparent;border-top:4px solid #000;border-bottom:0}
.a.lo::after{top:21px}
.a.hi::after{top:14px}
.a.short{width:10.500px}
.a.short::after{left:2px}
.i{width:24px;height:24px}
.startlabel{width:26px;flex:none;font-size:12px}
.search{width:110px;height:22px;background:#fff;border:1px solid #bbb;display:flex;align-items:center;justify-content:space-between;color:#999;padding:0 1px 0 3px;font-size:12px}
.lens{width:20px;height:20px}
.col{flex-direction:column;justify-content:center}
.binoc{width:22px;height:13px}
.h7{font:bold 13px "Liberation Sans",sans-serif;color:#222;line-height:13px;letter-spacing:-.5px}
.h7 em{font-style:normal;color:#a01010}
.num{font:bold 12px/12px "Liberation Sans",sans-serif;color:#333;text-align:center}
.st{flex-direction:column;justify-content:center}
.st u{display:block;text-decoration:none;font-size:10px;line-height:9px;letter-spacing:0}
.red{color:#a01010}
.st q{quotes:none;color:#999}
.blue{color:#1414c0}
.s.num.blue{letter-spacing:-.5px}
.st.blue u{font-size:9px;letter-spacing:-.2px}
.boxed{border:1px solid #a01010;padding:0 1px;line-height:11px;color:#222}
.rr{overflow:visible}
.rt{position:absolute;top:5px;left:14px;font:bold 8px "Liberation Sans",sans-serif;color:#b01010}
.rt.tilt{transform:rotate(-45deg);top:6px;left:8px}
.selbar{height:27px;flex:none;display:flex;align-items:center;background:linear-gradient(#dcdcdc,#c8c8c8);border-bottom:1px solid #a4a4a4;padding:0 0 1px 5px}
.combo{height:17px;background:#fff;border:1px solid #777;border-radius:3px;display:flex;align-items:center;justify-content:space-between;overflow:hidden;font-size:12px;color:#000;padding-left:1px;flex:none}
.c1{width:114px;margin-right:9px}
.c2{width:119px}
.cbtn{width:16px;height:15px;background:linear-gradient(#3f78d0,#b7d2f0);border-left:1px solid #456;position:relative;flex:none}
.cbtn::after{content:"";position:absolute;left:3px;top:5px;border:4.500px solid transparent;border-top:5px solid #1a1a2a;border-bottom:0}
.sg{display:flex;align-items:center;height:25px;padding:0 3px;box-shadow:inset -1px 0 #ececec,inset -2px 0 #bfbfbf;flex:none}
.sg.pa{padding-left:5px;width:31px}
.sg.pb{padding-left:5px}
.sg.nb{box-shadow:none}
.q{width:23px;height:25px;flex:none;display:flex;align-items:center;justify-content:center}
.q.n{width:20px}
.sg .a{height:25px}
.sg .a::after{top:11px}
.j{width:22px;height:22px;flex:none}
.j.on{background:#fff;border:1px solid #555;border-radius:3px}
.j.red-frame{border:1px solid #c01010;background:#d8d8d8;width:17px;height:17px}
.a.selarrow{margin-left:auto;margin-right:2px}
.work{flex:1;display:flex;min-height:0;position:relative}
.gfx{width:917px;flex:none;background:linear-gradient(#b8b9bb,#e0e1e3);min-height:0}
.model{width:917px;height:418px;display:block}
.ax{font:13px "Liberation Sans",sans-serif;fill:#1010e8}
.panel{width:418px;flex:none;background:#ececec;display:flex;flex-direction:column;padding-left:10px;overflow:hidden}
.panelhead{height:31px;display:flex;align-items:center;padding:0 0 1px 5px;flex:none;color:#111}
.panelhead strong{font-size:13px;margin-left:11px;letter-spacing:0}
.pin{width:13px;height:12px;border:1.500px solid #111;background:#f4f4f4;display:block}
.table{width:402px;flex:1;border-left:1px solid #777;border-right:1px solid #777;border-top:1px solid #777;background:#fff;overflow:hidden}
.row{height:20px;display:flex;border-bottom:1px solid #e6e6e6}
.row:nth-child(odd){background:#f6f6f6}
.row.head{height:17px;background:linear-gradient(#f2f4f3,#c4c8c8);border-bottom:0}
.c{height:100%;border-right:2px solid #e8e8e8;display:flex;align-items:center;flex:none;position:relative}
.c.name{width:201px}
.c.latest{width:100px;padding-left:6px}
.c.note{width:97px;border:0}
.head .c{border-right:1px solid #888;padding-left:6px;font-size:12px;color:#111}
.head .c.note{border:0}
.sort{margin-left:16px;border:5px solid transparent;border-bottom:5px solid #111;border-top:0;border-left-width:6px;border-right-width:6px}
.stem{width:9px;height:20px;margin-left:11px;border-left:1px dotted #888;position:relative;flex:none}
.stem::after{content:"";position:absolute;left:0;right:0;top:10px;border-top:1px dotted #888}
.stem.start{height:10px;align-self:flex-end;margin-bottom:0}
.stem.start::after{top:0}
.stem.last{height:10px;align-self:flex-start}
.stem.last::after{top:9px}
.stem.l2{margin-left:29px;width:11px}
.pm{position:absolute;left:-6px;top:5px;width:11px;height:11px;background:#fff;border:1px solid #888;font:normal 10px/9px "Liberation Sans",sans-serif;text-align:center;color:#111;z-index:1}
.stem.last .pm{top:5px}
.ic{width:16px;height:16px;flex:none;margin-right:3px}
.ic.sm{width:15px;height:15px}
.okm{width:13px;height:13px;flex:none;margin:0 3px 0 2px}
.lb{color:#222;font-size:12px;white-space:nowrap}
.lb.cam{margin-left:1px}
.cbx{width:13px;height:13px;flex:none;margin-right:2px;margin-left:1px}
.cbx.shifted{position:relative;left:4px;top:2px}
.flag{position:absolute;left:39px;top:2px;width:11px;height:11px}
.ic2{width:15px;height:16px;flex:none;margin-right:3px}
.lb2{color:#222;font-size:12px;white-space:nowrap}
.lb2 small{font:10.500px "Liberation Mono",monospace;margin-left:3px;letter-spacing:0}
.dim{color:#999}
.cur{font-weight:700}
.cur small{font-weight:700}
.okc{width:14px;height:14px}
.strip{width:31px;flex:none;background:#b6b6b6;border-left:1px solid #8e8e8e;display:flex;flex-direction:column;align-items:flex-start}
.gear{height:45px;width:100%;font-size:16px;line-height:30px;text-align:center;color:#111;font-family:"DejaVu Sans",sans-serif}
.tab{width:26px;height:40px;margin-bottom:3px;background:#dcdcdc;border:1px solid #777;border-left:0;border-radius:0 5px 5px 0;display:flex;align-items:center;justify-content:center;flex:none}
.tab.active{width:29px;height:44px;background:#f4f4f4;margin:-3px 0 1px;border-color:#aaa}
.tab.sep{margin-top:10px;margin-bottom:0}
.tab.tight{margin-top:3px}
.ti2{width:22px;height:28px}
.wm{position:absolute;left:1083px;top:323px;display:flex;pointer-events:none;gap:9px;width:260px}
.wmhex{width:72px;height:83px;flex:none;opacity:.95}
.wmtext{display:flex;flex-direction:column;color:#fff;opacity:.55;padding-top:19px}
.wmtext b{font:bold 37px/38px "Liberation Sans","Noto Sans CJK SC",sans-serif;white-space:nowrap}
.wmtext span{font:13px "Liberation Sans",sans-serif;letter-spacing:2.600px;white-space:nowrap}
```
